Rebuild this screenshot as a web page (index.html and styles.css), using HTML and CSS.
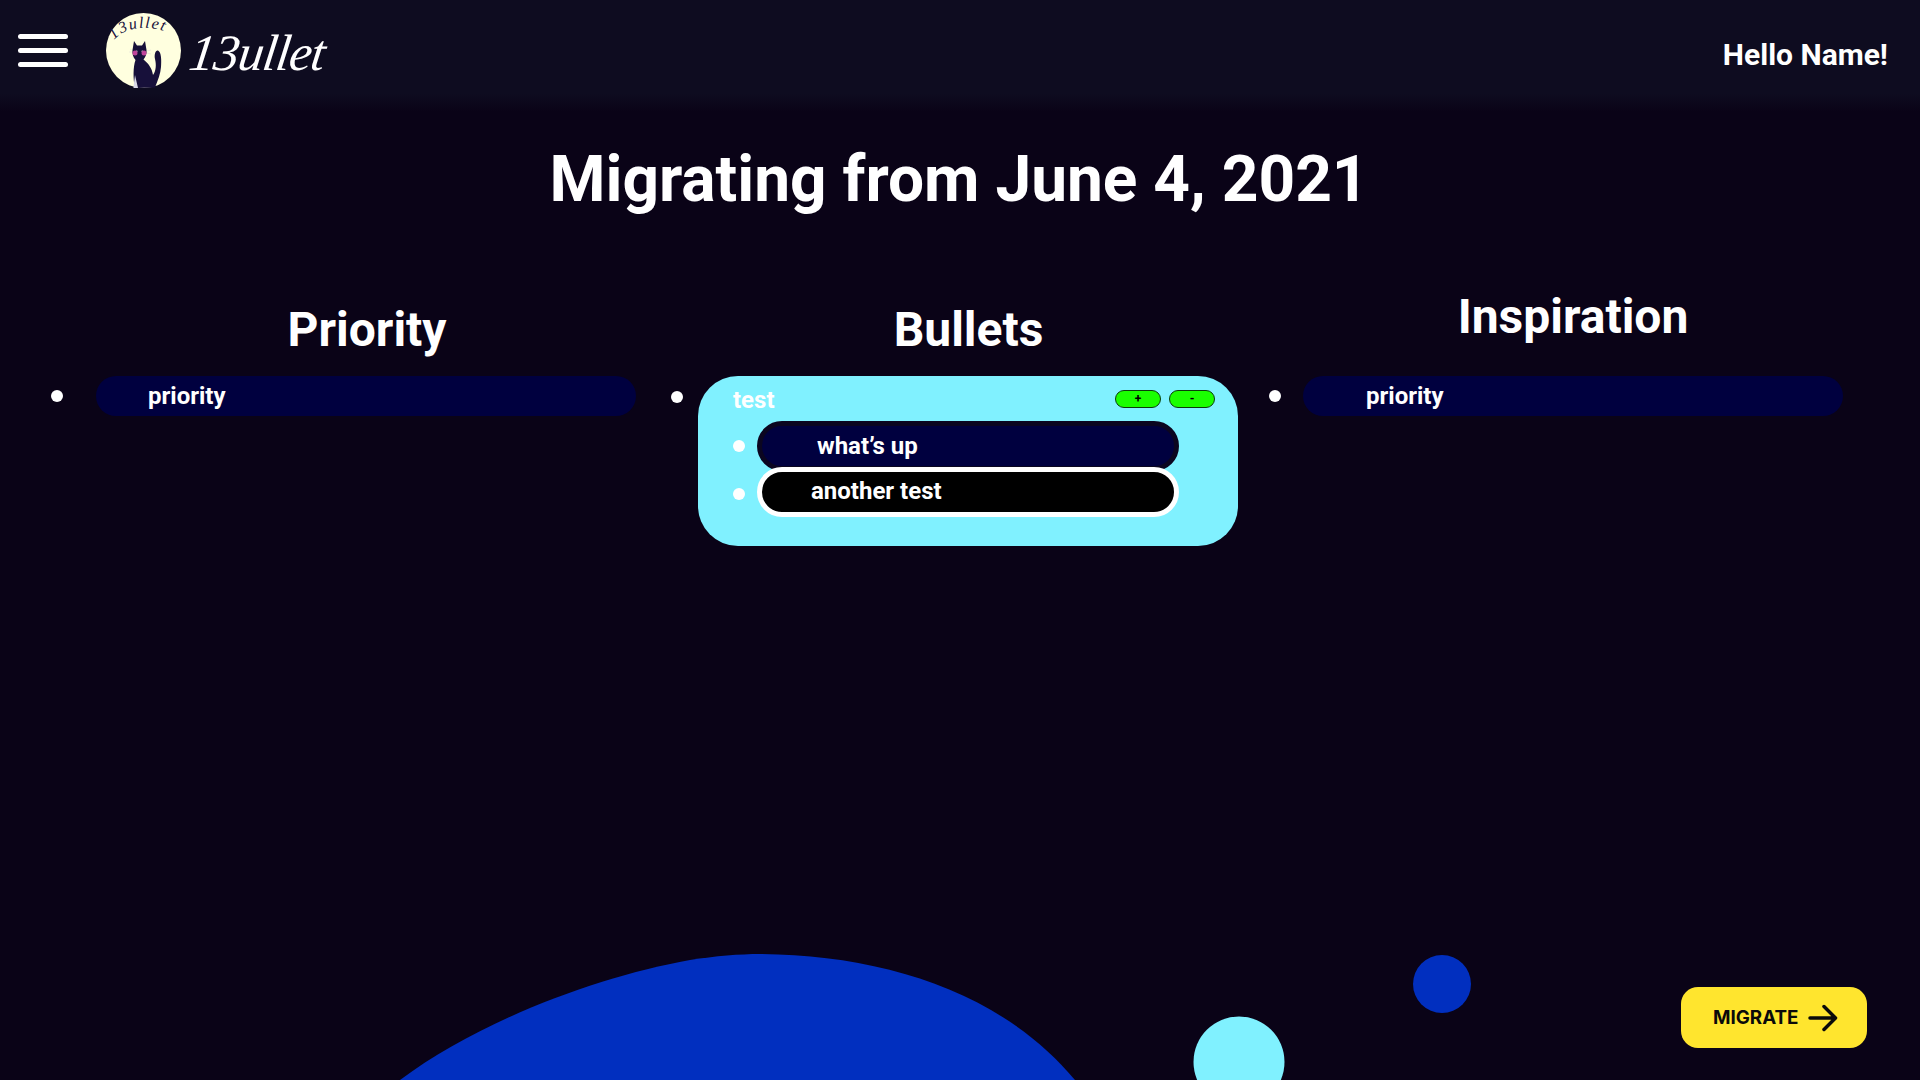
FILE: index.html
```html
<!DOCTYPE html>
<html lang="en">
<head>
<meta charset="utf-8">
<title>Migrate</title>
<link rel="stylesheet" href="styles.css">
</head>
<body>
<svg class="backdrop" viewBox="0 0 1920 1080" aria-hidden="true">
  <path class="blob" d="M400 1080C480 1020 600 976 690 960C715 956 740 954 760 954C880 955 1000 990 1075 1080Z"/>
  <circle class="blob" cx="1442" cy="984" r="29"/>
  <circle class="aqua" cx="1239" cy="1062" r="45.5"/>
</svg>
<header class="topbar">
  <div class="brand">
    <div class="burger"><span></span><span></span><span></span></div>
    <svg class="logo" viewBox="0 0 75 75" role="img">
      <defs><path id="arc" d="M8 27C18 14 48 9 69 24"/></defs>
      <circle cx="37.500" cy="37.500" r="37.500" fill="#ffffdf"/>
      <text class="logo-text"><textPath href="#arc">13ullet</textPath></text>
      <path class="cat" d="M28 28L31 32.500L36 32.500L39 28L40.500 37C41 41 39.500 44 37.500 46.500C42 50 46 55 47 62C50 58 50.500 52 49 46C48 41.500 49.500 37 52 37.500C55.500 39 55.500 48 55 54C54.500 61 52 67 49 74.500L29 75C27 66 27 54 29.500 47C27 44 26 40.500 26.500 37Z"/>
      <path class="cat-light" d="M27.500 75C28 69 28.500 66 29 62L32 75Z"/>
      <circle class="cheek" cx="29" cy="40" r="2.500"/>
      <circle class="cheek" cx="38" cy="40" r="2.500"/>
      <path class="whisker" d="M26 37L24 36M26 39L23 39M41 38L45 37M41 40L45 41M30 37.500L32 38.500M37 37.500L35 38.500"/>
    </svg>
    <span class="wordmark">13ullet</span>
  </div>
  <span class="greeting">Hello Name!</span>
</header>
<main class="page">
  <h1 class="title">Migrating from June 4, 2021</h1>
  <div class="columns">
    <section class="column column-priority">
      <h2 class="heading">Priority</h2>
      <div class="entry">
        <i class="dot"></i>
        <div class="pill">priority</div>
      </div>
    </section>
    <section class="column column-bullets">
      <h2 class="heading">Bullets</h2>
      <div class="entry entry-card">
        <i class="dot"></i>
        <div class="card">
          <div class="card-head">
            <span class="card-title">test</span>
            <div class="card-actions">
              <button class="mini">+</button>
              <button class="mini">-</button>
            </div>
          </div>
          <div class="sub-row">
            <i class="dot"></i>
            <div class="sub sub-dark">what’s up</div>
          </div>
          <div class="sub-row sub-row-second">
            <i class="dot"></i>
            <div class="sub sub-active">another test</div>
          </div>
        </div>
      </div>
    </section>
    <section class="column column-inspiration">
      <h2 class="heading">Inspiration</h2>
      <div class="entry">
        <i class="dot"></i>
        <div class="pill">priority</div>
      </div>
    </section>
  </div>
</main>
<button class="migrate">MIGRATE
  <svg class="arrow" viewBox="0 0 30 28" aria-hidden="true"><path d="M2 14H27M16 2.500L27.500 14L16 25.500"/></svg>
</button>
</body>
</html>
```
FILE: styles.css
```css
* { box-sizing: border-box; }
html, body { height: 100%; }
body {
  margin: 0;
  height: 1080px;
  overflow: hidden;
  background: #0a0317;
  color: #fff;
  font-family: Roboto, "Liberation Sans", sans-serif;
  position: relative;
}
.backdrop { position: absolute; left: 0; top: 0; width: 1920px; height: 1080px; }
.blob { fill: #012fbf; }
.aqua { fill: #80f1ff; }

.topbar {
  position: relative;
  height: 118px;
  padding: 13px 32px 0 18px;
  display: flex;
  justify-content: space-between;
  align-items: flex-start;
  background: linear-gradient(#0e0c20 0, #0e0c20 94px, #0a0317 112px);
}
.brand { display: flex; align-items: flex-start; }
.burger { width: 50px; margin-top: 21px; display: flex; flex-direction: column; gap: 9px; }
.burger span { display: block; height: 5px; border-radius: 3px; background: #fff; }
.logo { width: 75px; height: 75px; margin-left: 38px; display: block; }
.logo-text { font: italic 16px "Liberation Serif", serif; fill: #17103a; letter-spacing: 1.5px; }
.cat { fill: #17103a; }
.cat-light { fill: #d9d9e8; }
.cheek { fill: #c0449a; }
.whisker { stroke: #d8d8d8; stroke-width: .5; fill: none; }
.wordmark {
  margin: 8px 0 0 9px;
  font: italic 400 51px/64px "Liberation Serif", serif;
  letter-spacing: -1px;
  color: #fff;
  transform: skewX(-8deg);
}
.greeting { margin-top: 25px; font-size: 30px; line-height: 34px; font-weight: 700; }

.page { position: relative; margin-top: 24px; }
.title {
  margin: 0 0 0 -2px;
  text-align: center;
  font-size: 64px;
  line-height: 75px;
  font-weight: 700;
}
.columns {
  margin-top: 85px;
  padding-left: 51px;
  display: flex;
}
.column { display: flex; flex-direction: column; }
.column-priority { width: 620px; }
.column-bullets { width: 598px; }
.column-inspiration { width: 574px; }
.heading {
  margin: 0 0 18px;
  font-size: 48px;
  line-height: 56px;
  font-weight: 700;
  text-align: center;
}
.column-priority .heading { padding-left: 45px; margin-right: 33px; margin-bottom: 18px; }
.column-bullets .heading { padding-left: 46px; margin-right: 49px; }
.column-inspiration .heading { padding-left: 40px; margin-right: 6px; margin-top: -13px; margin-bottom: 31px; }

.entry { display: flex; align-items: center; }
.entry-card { align-items: flex-start; }
.dot { flex: none; width: 12px; height: 12px; border-radius: 50%; background: #fff; }
.pill {
  flex: none;
  width: 540px;
  height: 40px;
  margin-left: 33px;
  padding-left: 52px;
  border-radius: 20px;
  background: #00003f;
  font-size: 24px;
  line-height: 40px;
  font-weight: 700;
}
.column-inspiration .pill { margin-left: 22px; padding-left: 63px; }
.entry-card > .dot { margin-top: 15px; }
.card {
  flex: none;
  width: 540px;
  height: 170px;
  margin-left: 15px;
  padding: 14px 23px 0 35px;
  border-radius: 40px;
  background: #80f1ff;
}
.card-head { display: flex; justify-content: space-between; align-items: flex-start; height: 31px; }
.card-title { font-size: 24px; line-height: 20px; font-weight: 700; }
.card-actions { display: flex; gap: 8px; }
.mini {
  width: 46px;
  height: 18px;
  padding: 0;
  border: 1px solid #0b3b0b;
  border-radius: 9px;
  background: #1aff00;
  color: #000;
  font: 700 12px/16px Roboto, sans-serif;
}
.sub-row { display: flex; align-items: center; }
.sub {
  width: 422px;
  height: 50px;
  margin-left: 12px;
  border-radius: 25px;
  font-size: 24px;
  line-height: 40px;
  font-weight: 700;
  border: 5px solid;
}
.sub-dark { background: #00003f; border-color: #0b0620; padding-left: 55px; }
.sub-active { background: #000; border-color: #fff; padding-left: 49px; position: relative; line-height: 39px; }
.sub-row-second { margin-top: -4px; }
.sub-row-second .dot { margin-top: 4px; }

.migrate {
  position: absolute;
  left: 1681px;
  top: 987px;
  width: 186px;
  height: 61px;
  padding: 0 0 0 32px;
  display: flex;
  align-items: center;
  gap: 9px;
  border: 0;
  border-radius: 17px;
  background: #ffe52e;
  color: #0a0a0a;
  font: 700 18.8px/24px Inter, Roboto, sans-serif;
}
.arrow { width: 30px; height: 28px; fill: none; stroke: #0a0a0a; stroke-width: 3.500; stroke-linecap: round; stroke-linejoin: round; }
```
